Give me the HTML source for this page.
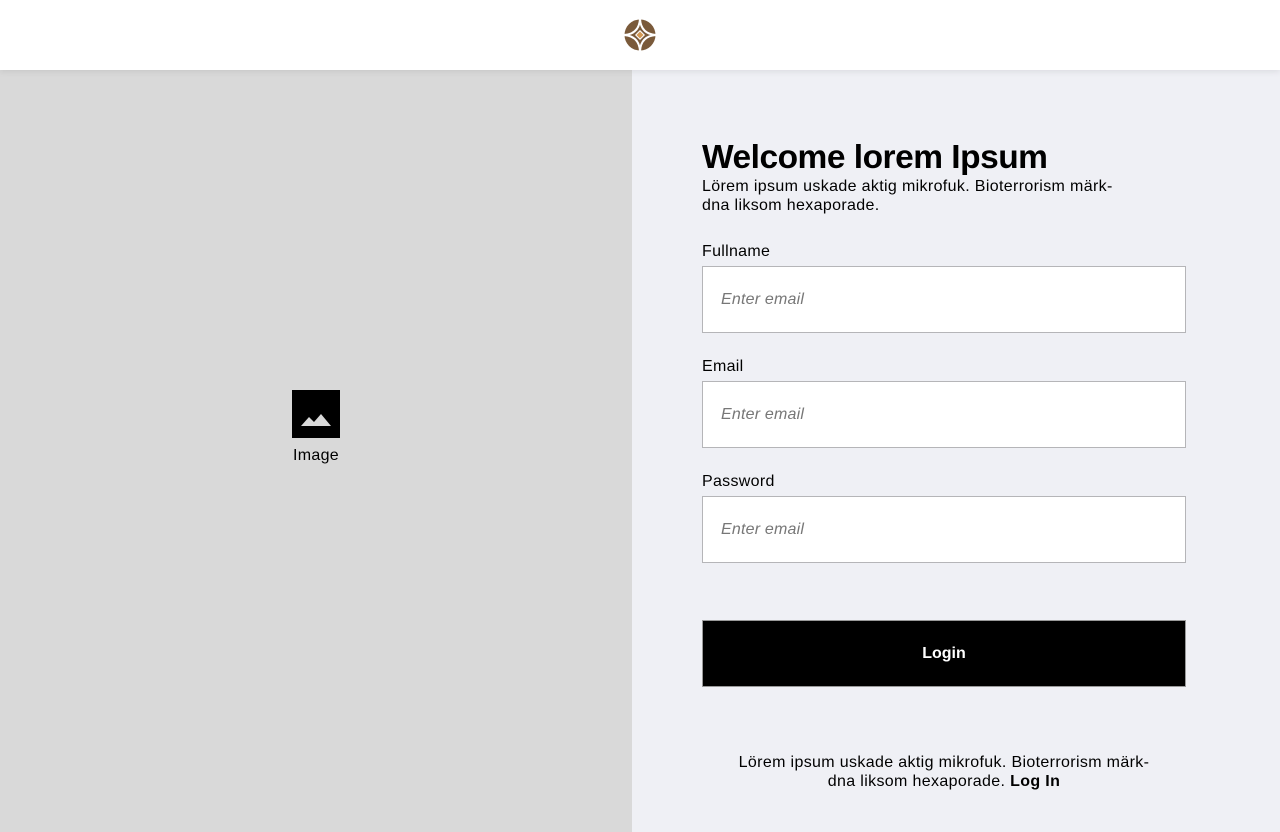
<!DOCTYPE html>
<html><head><meta charset="utf-8"><style>
*{box-sizing:border-box;margin:0;padding:0}
body{width:1280px;height:832px;overflow:hidden;font-family:"Liberation Sans",sans-serif;background:#eff0f5;position:relative;color:#000}
.top{position:absolute;left:0;top:0;width:1280px;height:70px;background:#fff;box-shadow:0 2px 6px rgba(0,0,0,0.08);z-index:2}
.left{position:absolute;left:0;top:70px;width:632px;height:762px;background:#d9d9d9}
.img{position:absolute;left:292px;top:390px;width:48px;height:48px;background:#000}
.imgl{position:absolute;left:278px;top:447px;width:76px;text-align:center;font-size:16px;letter-spacing:0.3px}
h1{position:absolute;left:702px;top:139px;font-size:33.5px;font-weight:bold;letter-spacing:-0.5px}
.sub{position:absolute;left:702px;top:177px;font-size:16px;line-height:19px;width:460px;letter-spacing:0.35px}
.lab{position:absolute;left:702px;font-size:16px;letter-spacing:0.3px}
.inp{position:absolute;left:702px;width:484px;height:67px;background:#fff;border:1px solid #b5b5b8;font-size:16px;font-style:italic;color:#777;padding-left:18px;line-height:65px;letter-spacing:0.2px}
.btn{position:absolute;left:702px;top:620px;width:484px;height:67px;background:#000;color:#fff;font-weight:bold;font-size:16px;text-align:center;line-height:66px;border:1px solid #999}
.foot{position:absolute;left:692px;top:753px;width:504px;text-align:center;font-size:16px;line-height:19px;letter-spacing:0.35px}
</style></head><body>
<div class="top">
<svg style="position:absolute;left:624px;top:19px" width="32" height="32" viewBox="0 0 32 32">
<circle cx="16" cy="16" r="15.5" fill="#7a5a3a"/>
<path d="M16 0 Q17 15 32 16 Q17 17 16 32 Q15 17 0 16 Q15 15 16 0Z" fill="none" stroke="#fff" stroke-width="2"/>
<path d="M16 11 L21 16 L16 21 L11 16Z" fill="#fff"/>
<path d="M16 12.5 L19.5 16 L16 19.5 L12.5 16Z" fill="#d49a55"/>
</svg>
</div>
<div class="left"></div>
<div class="img"><svg width="48" height="48" viewBox="0 0 48 48"><path d="M9 36 L17 27 L22 32 L29 24 L39 36Z" fill="#d9d9d9"/></svg></div>
<div class="imgl">Image</div>
<h1>Welcome lorem Ipsum</h1>
<div class="sub">Lörem ipsum uskade aktig mikrofuk. Bioterrorism märk-<br>dna liksom hexaporade.</div>
<div class="lab" style="top:243px">Fullname</div>
<div class="inp" style="top:266px">Enter email</div>
<div class="lab" style="top:358px">Email</div>
<div class="inp" style="top:381px">Enter email</div>
<div class="lab" style="top:473px">Password</div>
<div class="inp" style="top:496px">Enter email</div>
<div class="btn">Login</div>
<div class="foot">Lörem ipsum uskade aktig mikrofuk. Bioterrorism märk-<br>dna liksom hexaporade. <b>Log In</b></div>
</body></html>
